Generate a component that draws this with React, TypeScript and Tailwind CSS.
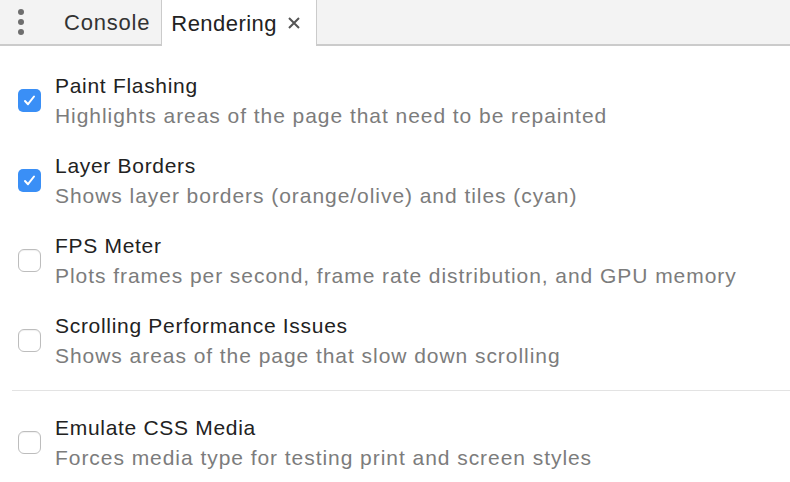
import React from "react";

type Option = { title: string; desc: string; checked: boolean };

const options: Option[] = [
  { title: "Paint Flashing", desc: "Highlights areas of the page that need to be repainted", checked: true },
  { title: "Layer Borders", desc: "Shows layer borders (orange/olive) and tiles (cyan)", checked: true },
  { title: "FPS Meter", desc: "Plots frames per second, frame rate distribution, and GPU memory", checked: false },
  { title: "Scrolling Performance Issues", desc: "Shows areas of the page that slow down scrolling", checked: false },
];

function Checkbox({ checked }: { checked: boolean }) {
  if (checked) {
    return (
      <div className="w-[23px] h-[23px] rounded-[5px] bg-[#3a8ff6] flex items-center justify-center shrink-0">
        <svg width="15" height="15" viewBox="0 0 15 15" fill="none">
          <path d="M3 8 L6 11.2 L12 3.5" stroke="white" strokeWidth="2" strokeLinecap="round" strokeLinejoin="round" />
        </svg>
      </div>
    );
  }
  return <div className="w-[23px] h-[23px] rounded-[6px] bg-white border border-[#bdbdbd] shadow-[inset_0_1px_1px_rgba(0,0,0,0.06)] shrink-0" />;
}

function Row({ opt }: { opt: Option }) {
  return (
    <div className="flex items-center">
      <div className="w-[55px] pl-[18px] pb-[1px]">
        <Checkbox checked={opt.checked} />
      </div>
      <div className="flex flex-col">
        <div className="text-[21px] leading-[30px] tracking-[0.7px] text-[#222]">{opt.title}</div>
        <div className="text-[21px] leading-[30px] tracking-[0.95px] text-[#7c7c7c]">{opt.desc}</div>
      </div>
    </div>
  );
}

export default function App() {
  return (
    <div className="w-[790px] h-[482px] bg-white overflow-hidden font-['Liberation_Sans',Arial,sans-serif]">
      {/* Tab bar */}
      <div className="h-[46px] bg-[#f3f3f3] border-b-2 border-[#cbcbcb] flex items-stretch">
        <div className="w-[42px] flex flex-col items-center justify-center gap-[4px]">
          <span className="w-[6px] h-[6px] rounded-full bg-[#6e6e6e]" />
          <span className="w-[6px] h-[6px] rounded-full bg-[#6e6e6e]" />
          <span className="w-[6px] h-[6px] rounded-full bg-[#6e6e6e]" />
        </div>
        <div className="flex items-center pl-[22px] pr-[11px] text-[22px] tracking-[0.8px] text-[#333]">Console</div>
        <div className="flex items-center gap-[10px] bg-white border-x border-[#cbcbcb] pl-[9px] pr-[15px] mb-[-2px] text-[22px] tracking-[0.45px] text-[#222]">
          <span>Rendering</span>
          <svg width="14" height="14" viewBox="0 0 14 14">
            <path d="M2 2 L12 12 M12 2 L2 12" stroke="#555" strokeWidth="2" />
          </svg>
        </div>
      </div>

      {/* Options */}
      <div className="pt-[25px] flex flex-col gap-[20px]">
        {options.map((o) => (
          <Row key={o.title} opt={o} />
        ))}
      </div>
      <div className="ml-[12px] mt-[19px] border-t border-[#e3e3e3]" />
      <div className="pt-[22px]">
        <Row opt={{ title: "Emulate CSS Media", desc: "Forces media type for testing print and screen styles", checked: false }} />
      </div>
    </div>
  );
}
